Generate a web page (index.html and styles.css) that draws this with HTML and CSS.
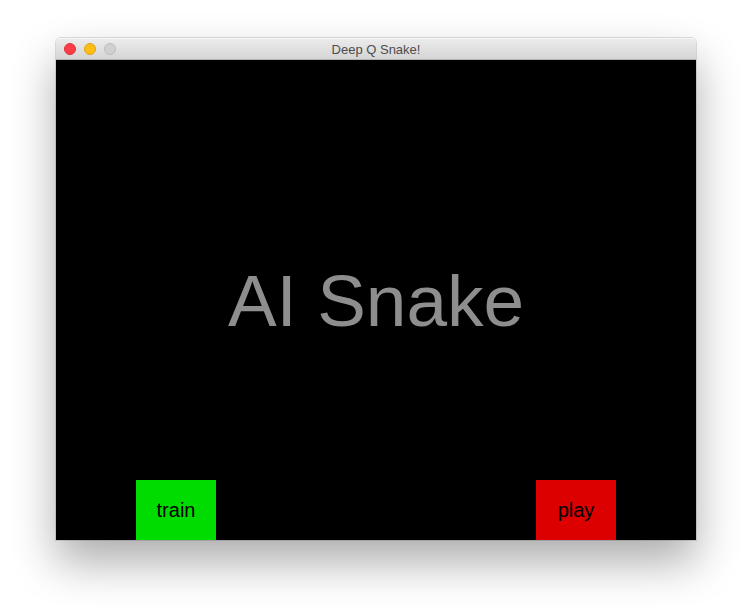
FILE: index.html
```html
<!DOCTYPE html>
<html>
<head>
<meta charset="utf-8">
<link rel="stylesheet" href="styles.css">
</head>
<body>
<div class="window">
  <div class="titlebar">
    <div class="lights">
      <span class="light close"></span>
      <span class="light min"></span>
      <span class="light max"></span>
    </div>
    <div class="title">Deep Q Snake!</div>
  </div>
  <div class="content">
    <div class="hero">AI Snake</div>
    <div class="buttons">
      <div class="btn train">train</div>
      <div class="btn play">play</div>
    </div>
  </div>
</div>
</body>
</html>
```

FILE: styles.css
```css
html, body {
  margin: 0;
  background: #ffffff;
}
body {
  box-sizing: border-box;
  min-height: 614px;
  padding: 38px 56px 0 56px;
  font-family: "Liberation Sans", Arial, sans-serif;
}
.window {
  width: 640px;
  border-radius: 5px 5px 0 0;
  box-shadow: 0 22px 45px rgba(0, 0, 0, 0.33), 0 0 0 1px rgba(0, 0, 0, 0.12);
}
.titlebar {
  height: 22px;
  box-sizing: border-box;
  background: linear-gradient(#ebebeb, #d5d5d5);
  border-top: 1px solid #f6f6f6;
  border-bottom: 1px solid #b1b1b1;
  border-radius: 5px 5px 0 0;
  display: grid;
  grid-template-columns: 1fr;
  align-items: center;
}
.lights, .title {
  grid-row: 1;
  grid-column: 1;
}
.lights {
  display: flex;
  gap: 8px;
  padding-left: 8px;
  align-items: center;
}
.light {
  width: 12px;
  height: 12px;
  border-radius: 50%;
  box-sizing: border-box;
}
.close { background: #fc3d48; border: 1px solid #e0313b; }
.min { background: #fdbd14; border: 1px solid #dfa510; }
.max { background: #d0d0d0; border: 1px solid #bdbdbd; }
.title {
  text-align: center;
  font-size: 13px;
  color: #4d4d4d;
  font-family: "Liberation Sans", Arial, sans-serif;
}
.content {
  height: 480px;
  background: #000000;
  box-sizing: border-box;
  padding-top: 60px;
  display: flex;
  flex-direction: column;
}
.hero {
  flex: 1;
  display: flex;
  align-items: center;
  justify-content: center;
  color: #8e8e8e;
  font-size: 73px;
}
.buttons {
  display: flex;
  gap: 320px;
  padding-left: 80px;
}
.btn {
  width: 80px;
  height: 60px;
  display: flex;
  align-items: center;
  justify-content: center;
  font-size: 20px;
  color: #000000;
}
.train { background: #00dc00; }
.play { background: #dc0000; }
```
